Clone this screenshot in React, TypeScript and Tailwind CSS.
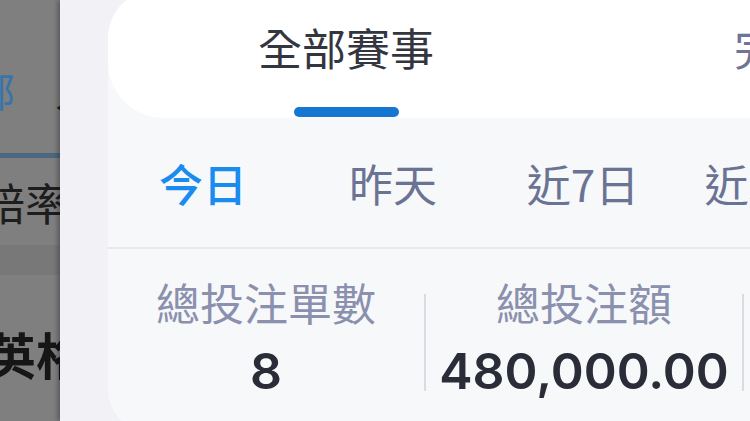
import React from "react";

const cjk = { fontFamily: '"Noto Sans CJK TC", "Noto Sans", sans-serif' };
const num = { fontFamily: 'Inter, "Noto Sans", sans-serif' };

export default function App() {
  return (
    <div className="w-[750px] h-[421px] flex overflow-hidden bg-[#808080]" style={cjk}>
      {/* dimmed background page */}
      <div className="w-[60px] shrink-0 h-full overflow-hidden flex flex-col bg-[#7f7f7f]">
        <div className="h-[153px] flex items-center whitespace-nowrap pt-[26px]">
          <span className="ml-[-25px] text-[40px] leading-[50px] text-[#3674ad]">部</span>
          <span className="ml-[40px] text-[40px] leading-[50px] text-[#1c1c1c]">人</span>
        </div>
        <div className="h-[5px] w-full bg-[#4b6782] shrink-0" />
        <div className="h-[87px] flex items-center whitespace-nowrap">
          <span className="ml-[-19px] text-[44px] leading-[60px] text-[#1d1d1d]">賠率</span>
        </div>
        <div className="h-[30px] bg-[#787878] shrink-0" />
        <div className="flex-1 flex items-start whitespace-nowrap pt-[46px]">
          <span className="ml-[-14px] text-[50px] leading-[64px] font-bold text-[#161616]">英格</span>
        </div>
      </div>

      {/* drawer panel */}
      <div className="flex-1 h-full bg-[#f2f2f6] pl-[48px] overflow-hidden shadow-[-3px_0_4px_rgba(0,0,0,0.25)] relative">
        <div className="w-[1000px] h-[446px] mt-[-10px] rounded-[48px] bg-[#f7f8fa] overflow-hidden flex flex-col">
          {/* tabs header */}
          <div className="h-[128px] shrink-0 bg-white rounded-bl-[56px] flex">
            <div className="w-[476px] h-full flex flex-col items-center pt-[27px]">
              <span className="text-[44px] leading-[60px] text-[#33363f]">全部賽事</span>
              <div className="mt-auto mb-[1px] w-[105px] h-[10px] rounded-full bg-[#1677d2]" />
            </div>
            <div className="w-[476px] h-full flex flex-col items-center pt-[27px]">
              <span className="text-[44px] leading-[60px] text-[#6e7596]">完成賽事</span>
            </div>
          </div>

          {/* date filters */}
          <div className="h-[129px] shrink-0 flex items-center">
            <div className="w-[190px] text-center text-[44px] leading-[60px] font-medium text-[#1a8cf0]">今日</div>
            <div className="w-[190px] text-center text-[44px] leading-[60px] text-[#6b7394]">昨天</div>
            <div className="w-[190px] text-center text-[44px] leading-[60px] text-[#6b7394]">近7日</div>
            <div className="w-[190px] text-center text-[44px] leading-[60px] text-[#6b7394]">近30日</div>
          </div>
          <div className="h-[2px] shrink-0 bg-[#e6e8ec]" />

          {/* stats */}
          <div className="flex items-center pt-[25px]">
            <div className="w-[316px] flex flex-col items-center">
              <span className="text-[44px] leading-[56px] text-[#8a90ad]">總投注單數</span>
              <span className="mt-[9px] text-[50px] leading-[64px] font-semibold text-[#2a2c38]" style={num}>8</span>
            </div>
            <div className="w-[2px] h-[97px] bg-[#d9dce3] mt-[8px]" />
            <div className="w-[316px] flex flex-col items-center">
              <span className="text-[44px] leading-[56px] text-[#8a90ad]">總投注額</span>
              <span className="mt-[9px] text-[50px] leading-[64px] font-semibold text-[#2a2c38]" style={num}>480,000.00</span>
            </div>
            <div className="w-[2px] h-[97px] bg-[#d9dce3] mt-[8px]" />
            <div className="w-[316px] flex flex-col items-center">
              <span className="text-[44px] leading-[56px] text-[#8a90ad]">總派彩</span>
              <span className="mt-[9px] text-[50px] leading-[64px] font-semibold text-[#2a2c38]" style={num}>0.00</span>
            </div>
          </div>
        </div>
      </div>
    </div>
  );
}
